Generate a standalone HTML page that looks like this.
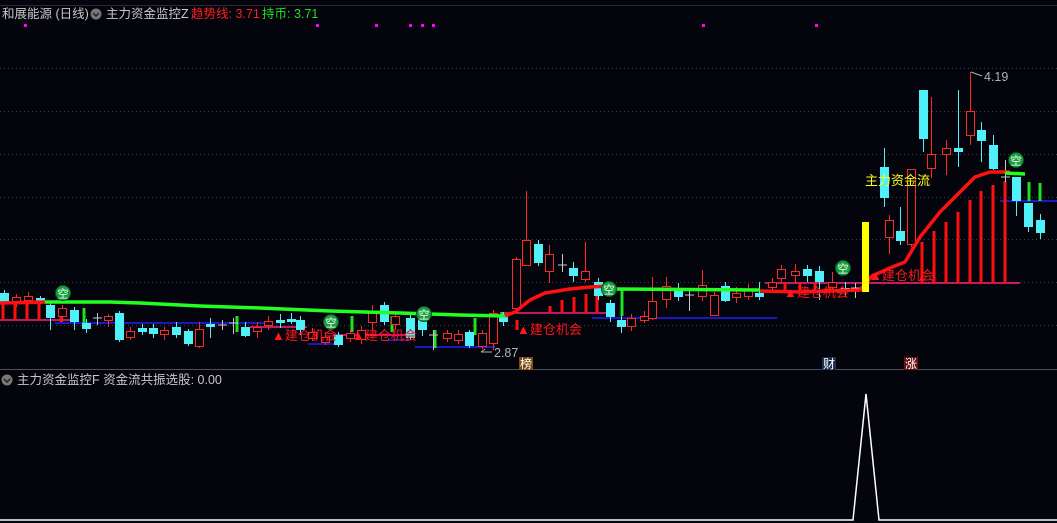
<!DOCTYPE html>
<html><head><meta charset="utf-8"><style>
html,body{margin:0;padding:0;background:#04040c;width:1057px;height:523px;overflow:hidden}
svg{display:block}
text{font-family:"Liberation Sans","Noto Sans CJK SC",sans-serif}
</style></head><body>
<svg id="s" width="1057" height="523" viewBox="0 0 1057 523" xmlns="http://www.w3.org/2000/svg">
<rect width="1057" height="523" fill="#04040c"/>
<line x1="0" y1="5.5" x2="1057" y2="5.5" stroke="#2a2a36"/>
<g stroke="#3c3c4c" stroke-dasharray="1,3">
<line x1="0" y1="68.5" x2="1057" y2="68.5"/><line x1="0" y1="111.5" x2="1057" y2="111.5"/>
<line x1="0" y1="154.5" x2="1057" y2="154.5"/><line x1="0" y1="197.5" x2="1057" y2="197.5"/>
<line x1="0" y1="239.5" x2="1057" y2="239.5"/><line x1="0" y1="282.5" x2="1057" y2="282.5"/>
<line x1="0" y1="325.5" x2="1057" y2="325.5"/>
</g>
<line x1="0" y1="369.5" x2="1057" y2="369.5" stroke="#505058"/>
<g fill="#ff00ff"><rect x="24" y="24" width="3" height="3"/><rect x="316" y="24" width="3" height="3"/><rect x="375" y="24" width="3" height="3"/><rect x="409" y="24" width="3" height="3"/><rect x="421" y="24" width="3" height="3"/><rect x="432" y="24" width="3" height="3"/><rect x="702" y="24" width="3" height="3"/><rect x="815" y="24" width="3" height="3"/></g>
<text x="2" y="18" font-size="12.5" fill="#c8c8c8">和展能源 (日线)</text>
<circle cx="96" cy="14" r="5.5" fill="#777"/><path d="M93 13 L96 16 L99 13" stroke="#222" fill="none" stroke-width="1.5"/>
<text x="106" y="18" font-size="12.5" fill="#c8c8c8">主力资金监控Z</text>
<text x="191" y="18" font-size="12.5" fill="#ff2020">趋势线: 3.71</text>
<text x="262" y="18" font-size="12.5" fill="#20e020">持币: 3.71</text>
<!-- horizontal lines -->
<g stroke-width="1.5">
<line x1="0" y1="320" x2="78" y2="320" stroke="#ff2080"/>
<line x1="250" y1="327" x2="307" y2="327" stroke="#ff2080"/>
<line x1="333" y1="335" x2="415" y2="335" stroke="#ff2080"/>
<line x1="500" y1="313" x2="615" y2="313" stroke="#ff2080"/>
<line x1="765" y1="283" x2="1020" y2="283" stroke="#ff2080"/>
<line x1="55" y1="323" x2="270" y2="323" stroke="#2020ff"/>
<line x1="308" y1="344" x2="342" y2="344" stroke="#2020ff"/>
<line x1="388" y1="340" x2="410" y2="340" stroke="#2020ff"/>
<line x1="415" y1="347" x2="495" y2="347" stroke="#2020ff"/>
<line x1="592" y1="318" x2="777" y2="318" stroke="#2020ff"/>
<line x1="1000" y1="201" x2="1057" y2="201" stroke="#2020ff"/>
</g>
<g id="bars" fill="#ff1010"></g>
<g id="c"></g>
<!-- trend lines -->
<polyline fill="none" stroke="#20ff20" stroke-width="3.5" points="45,302 110,302 140,303 200,306 260,308 330,311 400,313 460,315 505,316"/>
<polyline fill="none" stroke="#ff1010" stroke-width="3.5" points="0,303 45,302"/>
<polyline fill="none" stroke="#ff1010" stroke-width="3.5" points="505,316 515,312 530,300 545,293 570,289 590,287 610,286"/>
<polyline fill="none" stroke="#20ff20" stroke-width="3.5" points="610,289 760,290"/>
<polyline fill="none" stroke="#ff1010" stroke-width="3.5" points="760,291 800,292 860,290 872,276 890,268 905,262 920,237 940,212 960,192 975,177 990,172 1010,172"/>
<polyline fill="none" stroke="#20ff20" stroke-width="3.5" points="1005,173 1025,174"/>
<rect x="862" y="222" width="7" height="70" fill="#ffff00"/>
<g id="k"></g>
<g font-size="13" fill="#ff1818">
<text x="272" y="340">▲建仓机会</text><text x="352" y="340">▲建仓机会</text>
<text x="517" y="334">▲建仓机会</text><text x="784" y="297">▲建仓机会</text><text x="869" y="280">▲建仓机会</text>
</g>
<text x="865" y="185" font-size="13" fill="#ffff20">主力资金流</text>
<text x="984" y="81" font-size="12.5" fill="#b0b0b8">4.19</text>
<path d="M971 72 L982 76" stroke="#b0b0b8" fill="none"/>
<text x="494" y="357" font-size="12.5" fill="#b0b0b8">2.87</text>
<path d="M481 352 L492 352 M481 352 L485 349" stroke="#b0b0b8" fill="none"/>
<rect x="519" y="357" width="14" height="13" fill="#7a4a10"/><text x="520" y="368" font-size="12" fill="#fff">榜</text>
<rect x="822" y="357" width="14" height="13" fill="#1a3050"/><text x="823" y="368" font-size="12" fill="#fff">财</text>
<rect x="904" y="357" width="14" height="13" fill="#6a1010"/><text x="905" y="368" font-size="12" fill="#fff">涨</text>
<circle cx="7" cy="380" r="5.5" fill="#777"/><path d="M4 379 L7 382 L10 379" stroke="#222" fill="none" stroke-width="1.5"/>
<text x="17" y="384" font-size="12.5" fill="#c8c8c8">主力资金监控F  资金流共振选股: 0.00</text>
<polyline fill="none" stroke="#fff" stroke-width="1.5" points="0,520 853,520 866,394 879,520 1057,520"/>
</svg>
<script>
var NS="http://www.w3.org/2000/svg";
function el(p,t,a){var e=document.createElementNS(NS,t);for(var k in a)e.setAttribute(k,a[k]);p.appendChild(e);return e;}
var bars=document.getElementById('bars');
[[3,296,320],[15,300,320],[27,296,320],[39,300,320],[61,310,322],[517,320,330],[550,306,312],[562,300,312],[574,297,312],[586,294,312],[597,293,312],[785,283,290],[800,282,290],[815,282,290],[830,282,290],
[922,242,283],[934,231,283],[946,222,283],[958,212,283],[970,200,283],[981,191,283],[993,185,283],[1005,181,283]].forEach(function(b){el(bars,'rect',{x:b[0]-1.5,y:b[1],width:3,height:b[2]-b[1]});});
[[84,308,325],[237,316,332],[352,316,332],[392,316,332],[435,330,348],[475,318,335],[502,312,322],[622,289,316],[1029,182,201],[1040,183,201]].forEach(function(b){el(bars,'rect',{x:b[0]-1.5,y:b[1],width:3,height:b[2]-b[1],fill:'#20e020'});});
var C=[
[4,'c',293,302,290,304],[16,'r',297,302,294,307],[28,'r',296,300,292,304],[40,'c',298,302,296,304],[50,'c',305,318,303,330],[62,'r',308,316,305,322],[74,'c',310,322,307,330],[86,'c',323,329,319,333],[97,'w',318,319,313,325],[108,'r',316,320,314,327],[119,'c',313,340,311,342],[130,'r',331,337,327,340],[142,'c',328,332,324,335],[153,'c',328,334,324,338],[164,'r',330,334,327,340],[176,'c',327,335,322,338],[188,'c',331,344,329,346],[199,'r',329,346,322,348],[210,'c',324,327,318,338],[222,'w',325,326,320,330],[233,'w',323,326,318,334],[245,'c',327,336,322,337],[257,'r',327,331,322,338],[268,'r',321,325,316,330],[280,'c',320,323,314,328],[291,'c',319,322,313,324],[300,'c',320,330,316,335],[312,'r',332,338,328,341],[325,'r',337,342,332,345],[338,'c',335,345,332,347],[350,'r',333,338,330,342],[361,'r',330,339,326,344],[372,'r',312,322,305,330],[384,'c',305,322,302,325],[395,'r',316,324,312,330],[410,'c',318,338,314,340],[422,'c',316,330,312,336],[433,'w',335,345,330,350],[447,'r',333,338,330,342],[458,'r',334,340,330,344],[469,'c',332,346,330,348],[482,'r',333,346,330,349],[493,'r',313,343,310,350],[503,'c',315,322,312,326],[516,'r',259,308,257,312],[526,'r',240,265,191,266],[538,'c',244,263,240,266],[549,'r',254,271,245,283],[562,'w',265,266,254,272],[573,'c',268,276,262,282],[585,'r',271,279,242,282],[598,'c',282,296,278,300],[610,'c',303,317,300,322],[621,'c',320,327,316,333],[631,'r',318,326,314,331],[644,'r',316,320,311,323],[652,'r',301,318,277,320],[666,'r',286,299,277,308],[678,'c',289,297,283,301],[689,'w',295,297,290,311],[702,'r',285,296,270,301],[714,'r',295,315,292,316],[725,'c',286,301,282,302],[736,'r',293,297,287,303],[748,'r',290,296,284,300],[759,'c',293,297,282,300],[772,'r',282,287,278,292],[781,'r',269,278,265,282],[795,'r',271,275,264,284],[807,'c',269,276,265,282],[819,'c',271,282,266,300],[832,'r',282,287,272,292],[845,'c',288,291,282,296],[855,'w',288,289,283,298],
[884,'c',167,198,148,207],[889,'r',220,237,215,254],[900,'c',231,241,207,245],[911,'r',169,244,169,247],[923,'c',90,139,90,152],[931,'r',154,168,97,178],[946,'r',148,154,140,175],[958,'c',148,152,90,167],[970,'r',111,135,72,145],[981,'c',130,141,122,162],[993,'c',145,169,135,170],[1005,'w',177,178,160,182],[1016,'c',177,201,177,216],[1028,'c',203,227,203,232],[1040,'c',220,233,214,239]];
var k=document.getElementById('c');
C.forEach(function(d){var x=d[0],t=d[1],col=t=='c'?'#50f0f8':(t=='r'?'#ff2828':'#c8c8c8');
el(k,'line',{x1:x+.5,y1:d[4],x2:x+.5,y2:d[5],stroke:col,'stroke-width':1});
if(t=='c')el(k,'rect',{x:x-4,y:d[2],width:9,height:Math.max(2,d[3]-d[2]),fill:col});
else if(t=='r')el(k,'rect',{x:x-3.5,y:d[2]+.5,width:8,height:Math.max(2,d[3]-d[2]),fill:'#04040c',stroke:col,'stroke-width':1});
else el(k,'line',{x1:x-4,y1:d[2],x2:x+5,y2:d[2],stroke:col});});
var kk=document.getElementById('k');
[[63,293],[331,322],[424,314],[609,289],[843,268],[1016,160]].forEach(function(p){
el(kk,'circle',{cx:p[0],cy:p[1],r:7.5,fill:'#18a040',stroke:'#0a5020'});
var t=el(kk,'text',{x:p[0],y:p[1]+4.5,'font-size':11,fill:'#fff','text-anchor':'middle'});t.textContent='空';});
</script>
</body></html>
